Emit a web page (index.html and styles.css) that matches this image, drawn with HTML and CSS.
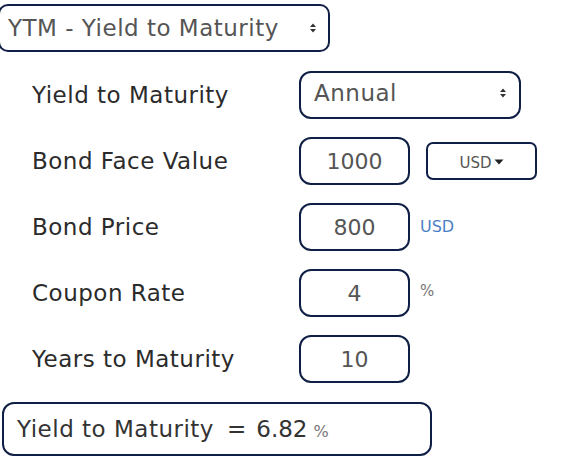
FILE: index.html
```html
<!DOCTYPE html>
<html>
<head>
<meta charset="utf-8">
<link rel="stylesheet" href="styles.css">
</head>
<body>
<div class="calc">
  <div class="select select-type">
    <span class="select-text">YTM - Yield to Maturity</span>
    <svg class="updown" width="8" height="12" viewBox="0 0 8 12"><path d="M4 1.5L7 5H1Z M4 10.5L7 7H1Z" fill="#333"/></svg>
  </div>
  <div class="rows">
    <div class="label">Yield to Maturity</div>
    <div class="control">
      <div class="select select-freq">
        <span class="select-text">Annual</span>
        <svg class="updown" width="8" height="12" viewBox="0 0 8 12"><path d="M4 1.5L7 5H1Z M4 10.5L7 7H1Z" fill="#333"/></svg>
      </div>
    </div>

    <div class="label">Bond Face Value</div>
    <div class="control">
      <div class="input">1000</div>
      <div class="currency">USD<svg class="caret" width="10" height="6" viewBox="0 0 10 6"><path d="M0.5 0.5H9.5L5 5.5Z" fill="#222"/></svg></div>
    </div>

    <div class="label">Bond Price</div>
    <div class="control">
      <div class="input">800</div>
      <span class="unit unit-usd">USD</span>
    </div>

    <div class="label">Coupon Rate</div>
    <div class="control">
      <div class="input">4</div>
      <span class="unit unit-pct">%</span>
    </div>

    <div class="label">Years to Maturity</div>
    <div class="control">
      <div class="input">10</div>
    </div>
  </div>
  <div class="result">
    <span class="result-label">Yield to Maturity</span>
    <span class="result-eq">=</span>
    <span class="result-value">6.82</span>
    <span class="result-unit">%</span>
  </div>
</div>
</body>
</html>
```

FILE: styles.css
```css
html, body {
  margin: 0;
  padding: 0;
  background: #ffffff;
}

body {
  font-family: "DejaVu Sans", "Open Sans", sans-serif;
  color: #2c2c2c;
}

.calc {
  padding-top: 4px;
  display: flex;
  flex-direction: column;
}

.select {
  box-sizing: border-box;
  border: 2px solid #0f1f45;
  display: flex;
  align-items: center;
  justify-content: space-between;
  color: #555555;
  font-size: 23px;
}

.select-type {
  margin-left: -2px;
  width: 332px;
  height: 48px;
  border-radius: 10px;
  padding: 0 11px 0 8px;
}

.select-freq {
  width: 222px;
  height: 48px;
  border-radius: 12px;
  padding: 0 12px 4px 13px;
}

.select-text {
  letter-spacing: 0.5px;
}

.updown {
  display: block;
}

.rows {
  margin-top: 19px;
  display: grid;
  grid-template-columns: 299px auto;
  row-gap: 18px;
  align-items: center;
}

.label {
  padding-left: 32px;
  font-size: 23px;
  color: #2b2b2b;
  letter-spacing: 0.5px;
}

.control {
  display: flex;
  align-items: center;
  height: 48px;
}

.input {
  box-sizing: border-box;
  width: 111px;
  height: 48px;
  border: 2px solid #0f1f45;
  border-radius: 12px;
  display: flex;
  align-items: center;
  justify-content: center;
  font-size: 22px;
  color: #555555;
}

.currency {
  box-sizing: border-box;
  margin-left: 16px;
  width: 111px;
  height: 38px;
  border: 2px solid #0f1f45;
  border-radius: 7px;
  display: flex;
  align-items: center;
  justify-content: center;
  gap: 2px;
  padding-top: 4px;
  font-size: 15px;
  color: #555555;
}

.caret {
  display: block;
  margin-top: -3px;
}

.unit {
  margin-left: 10px;
  margin-bottom: 2px;
}

.unit-usd {
  font-size: 16px;
  color: #4a7fc4;
}

.unit-pct {
  font-size: 15px;
  color: #777777;
  margin-bottom: 4px;
}

.result {
  box-sizing: border-box;
  margin-top: 19px;
  margin-left: 2px;
  width: 430px;
  height: 54px;
  border: 2px solid #0f1f45;
  border-radius: 12px;
  display: flex;
  align-items: center;
  padding: 0 0 0 13px;
  font-size: 23px;
  color: #333333;
}

.result-label {
  letter-spacing: 0.5px;
}

.result-eq {
  margin: 0 10px 0 13px;
}

.result-unit {
  margin-left: 6px;
  font-size: 16px;
  color: #777777;
  padding-top: 4px;
}
```
